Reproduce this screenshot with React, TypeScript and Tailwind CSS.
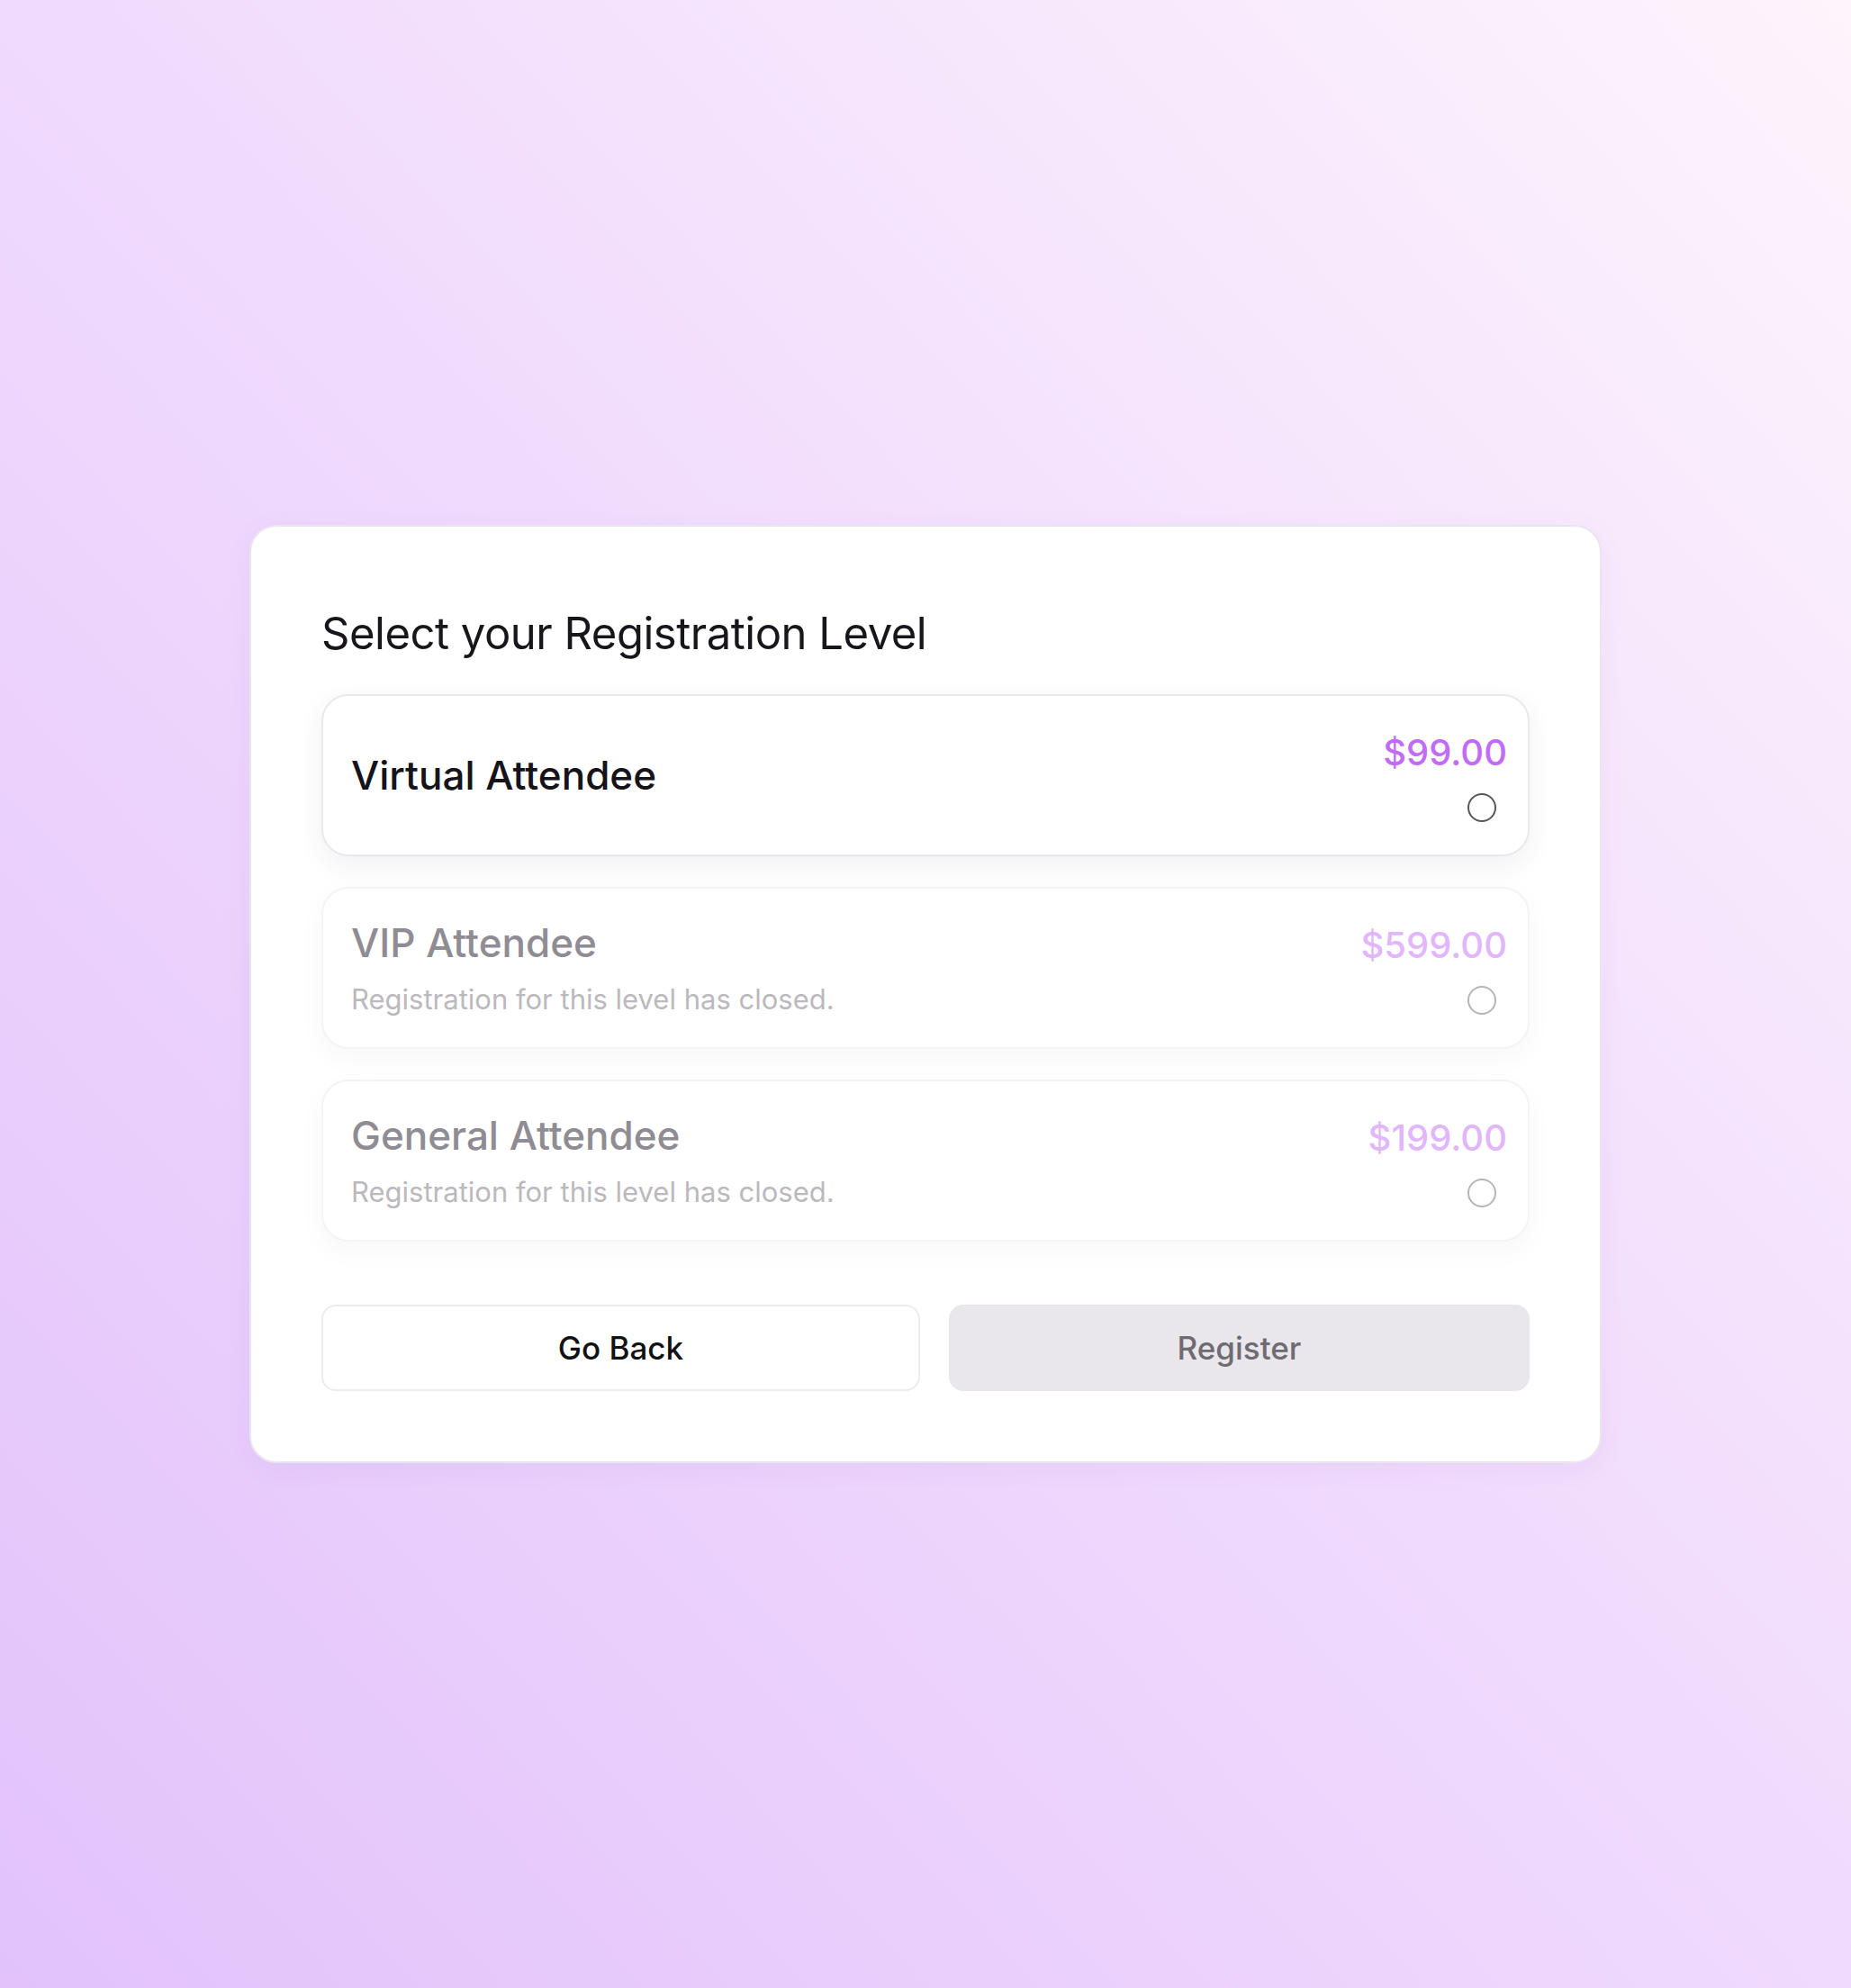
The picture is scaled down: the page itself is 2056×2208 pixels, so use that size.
import React, { useState } from "react";

type Level = {
  name: string;
  price: string;
  closed: boolean;
};

const levels: Level[] = [
  { name: "Virtual Attendee", price: "$99.00", closed: false },
  { name: "VIP Attendee", price: "$599.00", closed: true },
  { name: "General Attendee", price: "$199.00", closed: true },
];

const LevelOption = ({
  level,
  selected,
  onSelect,
}: {
  level: Level;
  selected: boolean;
  onSelect: () => void;
}) => {
  const closed = level.closed;
  return (
    <button
      type="button"
      disabled={closed}
      onClick={onSelect}
      className={
        closed
          ? "flex h-[180px] w-full items-center justify-between rounded-[30px] border-2 border-[#f4f3f6] bg-white pl-[31px] pr-[23px] text-left shadow-[0_10px_30px_rgba(60,40,80,0.035)]"
          : "flex h-[180px] w-full items-center justify-between rounded-[30px] border-2 border-[#e9e8ec] bg-white pl-[31px] pr-[23px] text-left shadow-[0_10px_30px_rgba(60,40,80,0.07)]"
      }
    >
      <div className="flex flex-col gap-[17px]">
        <span
          className={
            closed
              ? "text-[44px] leading-[52px] font-medium text-[#8f8c93]"
              : "text-[44px] leading-[52px] font-medium text-[#16141a]"
          }
        >
          {level.name}
        </span>
        {closed && (
          <span className="text-[31px] leading-[40px] text-[#bbb9be]">
            Registration for this level has closed.
          </span>
        )}
      </div>
      <div className="flex flex-col items-end gap-[20px] pt-[1px]">
        <span
          className={
            closed
              ? "text-[40px] leading-[50px] font-medium text-[#e2b6fb]"
              : "text-[40px] leading-[50px] font-medium text-[#c16cf6]"
          }
        >
          {level.price}
        </span>
        <span
          className={
            closed
              ? "mr-[12px] h-[32px] w-[32px] rounded-full border-[2.5px] border-[#b5b4b7]"
              : selected
                ? "mr-[12px] h-[32px] w-[32px] rounded-full border-[9px] border-[#c16cf6]"
                : "mr-[12px] h-[32px] w-[32px] rounded-full border-[2.5px] border-[#58565b]"
          }
        />
      </div>
    </button>
  );
};

export default function App() {
  const [selected, setSelected] = useState<number | null>(null);

  return (
    <div className="flex min-h-[2208px] w-full items-center justify-center bg-linear-to-tr from-[#e3c2fb] via-[#f0dafd] to-[#fdf4fc] font-['Inter','Noto_Sans',sans-serif]">
      <div className="w-[1502px] rounded-[30px] border-2 border-[#ebe4f1] bg-white px-[78px] pt-[89px] pb-[78px] shadow-[0_6px_30px_rgba(120,60,160,0.06)]">
        <h1 className="mb-[37px] text-[49px] leading-[60px] tracking-[-0.01em] text-[#18161b]">
          Select your Registration Level
        </h1>
        <div className="flex flex-col gap-[34px]">
          {levels.map((level, index) => (
            <LevelOption
              key={level.name}
              level={level}
              selected={selected === index}
              onSelect={() => setSelected(index)}
            />
          ))}
        </div>
        <div className="mt-[70px] flex gap-[32px]">
          <button
            type="button"
            className="h-[96px] w-[665px] rounded-[16px] border-2 border-[#ececef] bg-white text-[35px] font-medium text-[#121114]"
          >
            Go Back
          </button>
          <button
            type="button"
            disabled={selected === null}
            className="h-[96px] flex-1 rounded-[16px] bg-[#e9e7eb] text-[35px] font-medium text-[#6e6b72]"
          >
            Register
          </button>
        </div>
      </div>
    </div>
  );
}
